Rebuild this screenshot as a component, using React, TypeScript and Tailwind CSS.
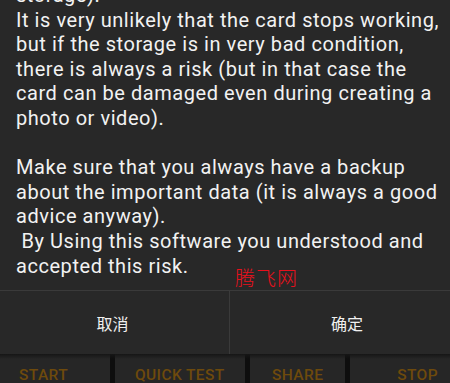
const LINES = [
  "storage).",
  "It is very unlikely that the card stops working,",
  "but if the storage is in very bad condition,",
  "there is always a risk (but in that case the",
  "card can be damaged even during creating a",
  "photo or video).",
  "\u00a0",
  "Make sure that you always have a backup",
  "about the important data (it is always a good",
  "advice anyway).",
  "\u00a0By Using this software you understood and",
  "accepted this risk.",
];

export default function App() {
  return (
    <div className="relative flex h-[383px] w-[450px] flex-col overflow-hidden bg-[#282828]">
      <div className="h-[290px] overflow-hidden pl-4">
        <div className="-mt-[17px] font-['Roboto',sans-serif] text-[20px] leading-[24.6px] tracking-[0.55px] whitespace-pre text-[#f2f2f2]">
          {LINES.map((l, i) => (
            <div key={i}>{l}</div>
          ))}
        </div>
      </div>
      <span className="absolute left-[235px] top-[265px] font-['Noto_Sans_CJK_SC',serif] text-[20px] font-light leading-[26px] tracking-[1px] text-[#e8101c]">
        腾飞网
      </span>
      <div className="flex h-[64px] border-t border-[#3a3a3a] font-['Noto_Sans_CJK_SC',sans-serif] text-[16px] text-[#f0f0f0]">
        <button className="flex w-[230px] items-center justify-center border-r border-[#3a3a3a] pr-[4px]">取消</button>
        <button className="flex flex-1 items-center justify-center pl-[14px]">确定</button>
      </div>
      <div className="relative flex h-[29px] bg-[#262626] font-['Roboto',sans-serif] text-[15.5px] font-medium tracking-[0.4px] text-[#6e4a0c]">
        <div className="pointer-events-none absolute inset-x-0 top-0 h-[5px] bg-gradient-to-b from-[#161616] to-transparent" />
        <div className="flex w-[110px] items-start pl-[19px] pt-[10px]">START</div>
        <div className="w-[5px] bg-[#0e0e0e]" />
        <div className="flex w-[130px] items-start pl-[20px] pt-[10px]">QUICK TEST</div>
        <div className="w-[5px] bg-[#0e0e0e]" />
        <div className="flex w-[95px] items-start pl-[22px] pt-[10px]">SHARE</div>
        <div className="w-[5px] bg-[#0e0e0e]" />
        <div className="flex flex-1 items-start justify-end pr-[12px] pt-[10px]">STOP</div>
      </div>
    </div>
  );
}
